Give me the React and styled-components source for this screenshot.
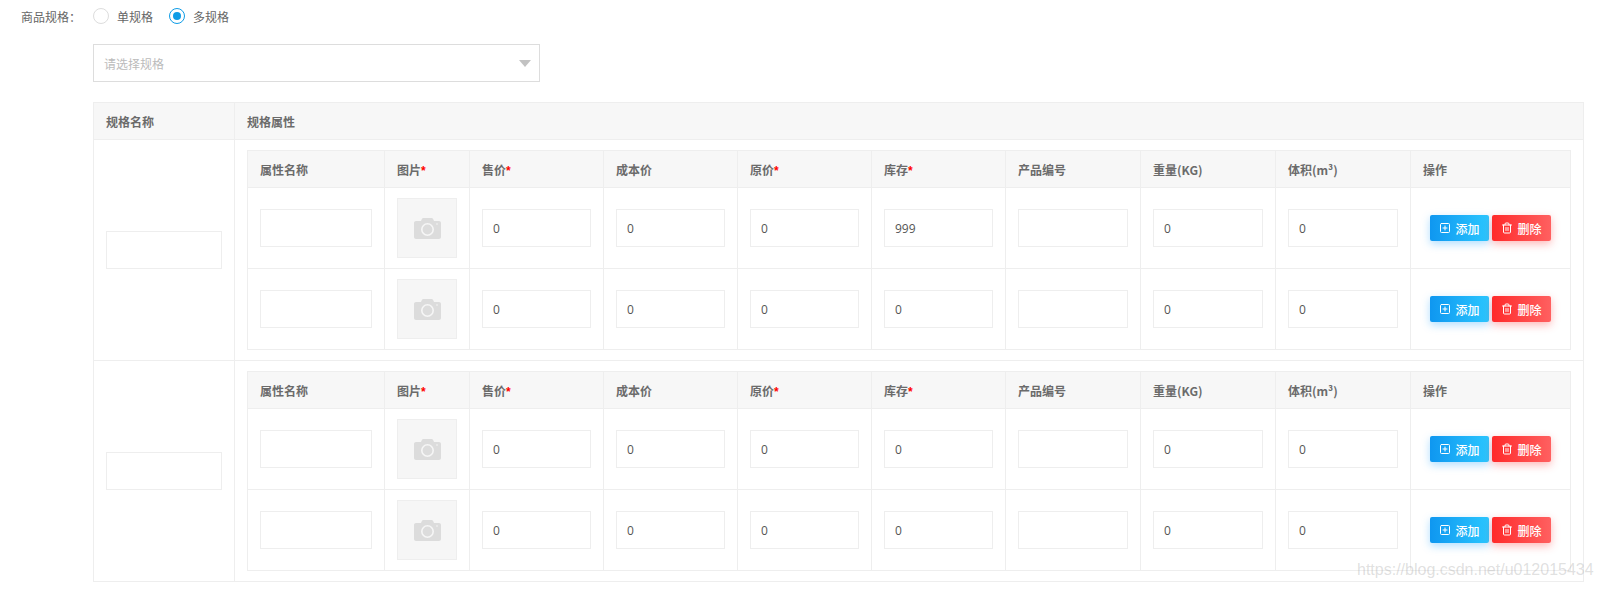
import React from "react";
import styled, { createGlobalStyle } from "styled-components";
import { SquarePlus, Trash2 } from "lucide-react";

const GlobalStyle = createGlobalStyle`
  html, body {
    margin: 0;
    padding: 0;
    background: #fff;
    overflow: hidden;
  }
  body {
    font-family: "Noto Sans CJK SC", "Open Sans", sans-serif;
    font-size: 12px;
    color: #666;
  }
`;

const Page = styled.div`
  position: relative;
  width: 1601px;
  height: 589px;
  overflow: hidden;
`;

const FormRow = styled.div`
  display: flex;
  align-items: center;
  height: 16px;
  padding: 8px 0 0 21px;
`;

const FormLabel = styled.span`
  width: 72px;
  white-space: nowrap;
`;

const RadioItem = styled.label`
  display: flex;
  align-items: center;
  gap: 8px;
  margin-right: 16px;
`;

const RadioDot = styled.span`
  box-sizing: border-box;
  width: 16px;
  height: 16px;
  border-radius: 50%;
  border: 1px solid ${(p) => (p.$checked ? "#0e9ce6" : "#ddd")};
  display: flex;
  align-items: center;
  justify-content: center;

  &::after {
    content: "";
    display: ${(p) => (p.$checked ? "block" : "none")};
    width: 8px;
    height: 8px;
    border-radius: 50%;
    background: #0e9ce6;
  }
`;

const SelectBox = styled.div`
  box-sizing: border-box;
  position: relative;
  width: 447px;
  height: 38px;
  margin: 20px 0 20px 93px;
  padding-left: 10px;
  border: 1px solid #ddd;
  line-height: 37px;
  color: #bbb;
`;

const Caret = styled.i`
  position: absolute;
  right: 8px;
  top: 15px;
  width: 0;
  height: 0;
  border-left: 6.5px solid transparent;
  border-right: 6.5px solid transparent;
  border-top: 7px solid #c2c2c2;
`;

const Table = styled.table`
  box-sizing: border-box;
  table-layout: fixed;
  border-collapse: collapse;
  width: ${(p) => p.$width}px;
  margin-left: ${(p) => p.$left || 0}px;
`;

const Col = styled.col`
  width: ${(p) => p.$w}px;
`;

const Th = styled.th`
  box-sizing: border-box;
  height: 37px;
  padding: 0 12px;
  border: 1px solid #eee;
  background: #f7f7f7;
  color: #6b6b6b;
  font-size: 12px;
  font-weight: 700;
  text-align: left;
  white-space: nowrap;
`;

const Td = styled.td`
  box-sizing: border-box;
  padding: 10px 12px;
  border: 1px solid #eee;
  height: ${(p) => p.$h || 81}px;
`;

const ActionCell = styled(Td)`
  padding: 10px 0;
`;

const Required = styled.em`
  color: #f00;
  font-family: "Liberation Sans", sans-serif;
  font-style: normal;
  font-weight: 700;
`;

const Input = styled.input`
  display: block;
  box-sizing: border-box;
  width: 100%;
  height: 38px;
  padding: 0 10px;
  border: 1px solid #eee;
  outline: none;
  background: #fff;
  color: #555;
  font-family: "Open Sans", "Noto Sans CJK SC", sans-serif;
  font-size: 12px;
`;

const ImageBox = styled.div`
  box-sizing: border-box;
  width: 60px;
  height: 60px;
  border: 1px solid #eee;
  background: #f6f6f6;
  display: flex;
  align-items: center;
  justify-content: center;
`;

const Actions = styled.div`
  display: flex;
  justify-content: center;
  gap: 3px;
`;

const Button = styled.button`
  display: flex;
  align-items: center;
  justify-content: center;
  gap: 4px;
  width: 59px;
  height: 26px;
  padding: 0;
  border: none;
  border-radius: 2px;
  color: #fff;
  font-family: inherit;
  font-size: 12px;
  font-weight: 500;
  background: ${(p) =>
    p.$danger
      ? "linear-gradient(90deg, #ff2a2a, #ff6060)"
      : "linear-gradient(90deg, #0f97f0, #2ac6ff)"};
  box-shadow: 0 3px 8px
    ${(p) => (p.$danger ? "rgba(255, 50, 50, 0.35)" : "rgba(30, 160, 255, 0.35)")};
`;

const Watermark = styled.div`
  position: absolute;
  left: 1357px;
  top: 560px;
  color: rgba(150, 150, 150, 0.3);
  font-family: "Liberation Sans", Arial, sans-serif;
  font-size: 16px;
  line-height: 20px;
  white-space: nowrap;
`;

const columns = [
  { title: "属性名称", w: 137 },
  { title: "图片", w: 85, required: true },
  { title: "售价", w: 134, required: true },
  { title: "成本价", w: 134 },
  { title: "原价", w: 134, required: true },
  { title: "库存", w: 134, required: true },
  { title: "产品编号", w: 135 },
  { title: "重量(KG)", w: 135 },
  { title: "体积(m³)", w: 135 },
  { title: "操作", w: 160 },
];

const groups = [[{ stock: "999" }, { stock: "0" }], [{ stock: "0" }, { stock: "0" }]];

function CameraIcon() {
  return (
    <svg width="27" height="21" viewBox="0 0 27 21">
      <path
        fill="#dcdcdc"
        d="M2 3h5l1-2.2C8.300.3 8.800 0 9.400 0h8.200c.6 0 1.100.3 1.400.8L20 3h5c1.100 0 2 .9 2 2v14c0 1.100-.9 2-2 2H2c-1.100 0-2-.9-2-2V5c0-1.100.9-2 2-2z"
      />
      <circle cx="13.500" cy="11.500" r="5.700" fill="none" stroke="#f6f6f6" strokeWidth="1.600" />
      <circle cx="23" cy="6" r="0.800" fill="#f6f6f6" />
    </svg>
  );
}

function SkuRow({ stock }) {
  return (
    <tr>
      <Td><Input readOnly defaultValue="" /></Td>
      <Td><ImageBox><CameraIcon /></ImageBox></Td>
      <Td><Input readOnly defaultValue="0" /></Td>
      <Td><Input readOnly defaultValue="0" /></Td>
      <Td><Input readOnly defaultValue="0" /></Td>
      <Td><Input readOnly defaultValue={stock} /></Td>
      <Td><Input readOnly defaultValue="" /></Td>
      <Td><Input readOnly defaultValue="0" /></Td>
      <Td><Input readOnly defaultValue="0" /></Td>
      <ActionCell>
        <Actions>
          <Button>
            <SquarePlus size={12} strokeWidth={2} />
            添加
          </Button>
          <Button $danger>
            <Trash2 size={12} strokeWidth={2} />
            删除
          </Button>
        </Actions>
      </ActionCell>
    </tr>
  );
}

function SkuTable({ rows }) {
  return (
    <Table $width={1323}>
      <colgroup>
        {columns.map((c) => (
          <Col key={c.title} $w={c.w} />
        ))}
      </colgroup>
      <thead>
        <tr>
          {columns.map((c) => (
            <Th key={c.title}>
              {c.title}
              {c.required && <Required>*</Required>}
            </Th>
          ))}
        </tr>
      </thead>
      <tbody>
        {rows.map((r, i) => (
          <SkuRow key={i} stock={r.stock} />
        ))}
      </tbody>
    </Table>
  );
}

export default function App() {
  return (
    <Page>
      <GlobalStyle />
      <FormRow>
        <FormLabel>商品规格：</FormLabel>
        <RadioItem>
          <RadioDot />
          单规格
        </RadioItem>
        <RadioItem>
          <RadioDot $checked />
          多规格
        </RadioItem>
      </FormRow>
      <SelectBox>
        请选择规格
        <Caret />
      </SelectBox>
      <Table $width={1490} $left={93}>
        <colgroup>
          <Col $w={141} />
          <Col $w={1349} />
        </colgroup>
        <thead>
          <tr>
            <Th>规格名称</Th>
            <Th>规格属性</Th>
          </tr>
        </thead>
        <tbody>
          {groups.map((rows, i) => (
            <tr key={i}>
              <Td $h={221}><Input readOnly defaultValue="" /></Td>
              <Td $h={221}><SkuTable rows={rows} /></Td>
            </tr>
          ))}
        </tbody>
      </Table>
      <Watermark>https://blog.csdn.net/u012015434</Watermark>
    </Page>
  );
}
